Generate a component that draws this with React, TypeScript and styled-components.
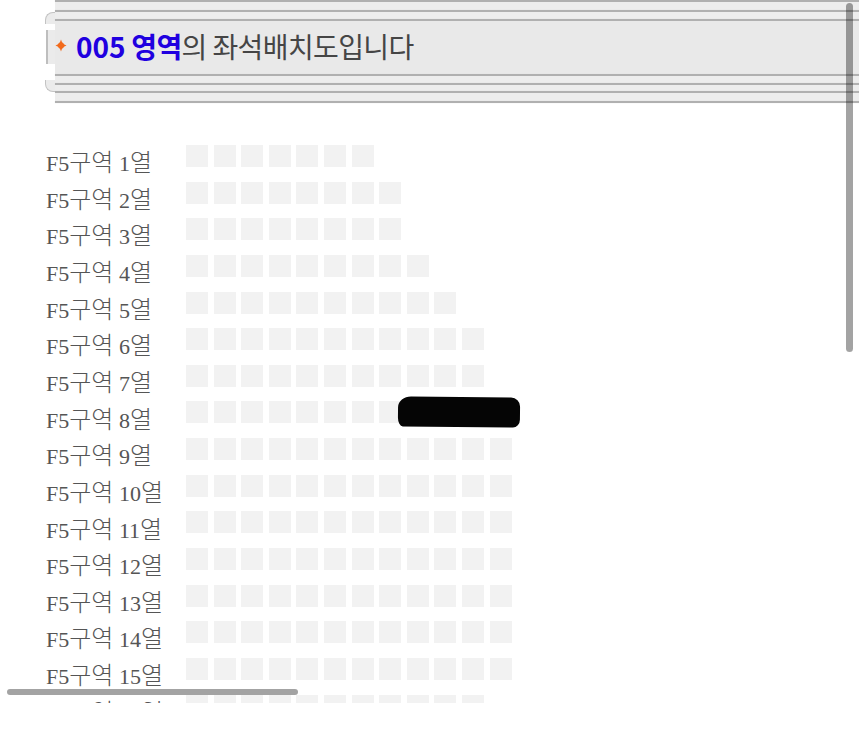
import React, { FC } from 'react'
import styled, { createGlobalStyle } from 'styled-components'

const SECTION = 'F5'
const ROW_COUNTS = [7, 8, 8, 9, 10, 11, 11, 12, 12, 12, 12, 12, 12, 12, 12, 11]
const REDACTED_ROW = 8

const GlobalStyle = createGlobalStyle`
  html, body {
    margin: 0;
    padding: 0;
    background: #fff;
    overflow: hidden;
  }
`

const Diamond: FC = () => (
  <svg width="12" height="13" viewBox="0 0 12 13">
    <path d="M6 0.5 C6.7 3.6 8.3 5.4 11.5 6.5 C8.3 7.6 6.7 9.4 6 12.5 C5.3 9.4 3.7 7.6 0.5 6.5 C3.7 5.4 5.3 3.6 6 0.5 Z" fill="#f26a1b" />
    <circle cx="6" cy="6.5" r="3" fill="#f26a1b" />
  </svg>
)

const SeatRow: FC<{ index: number; count: number }> = ({ index, count }) => (
  <Row>
    <Label>
      {SECTION}
      <Ko>구역</Ko> {index}
      <Ko>열</Ko>
    </Label>
    <Seats>
      {Array.from({ length: count }).map((_, i) => (
        <Seat key={i} />
      ))}
    </Seats>
    {index === REDACTED_ROW && <Redaction />}
  </Row>
)

export default function App() {
  return (
    <Page>
      <GlobalStyle />
      <Header>
        <LeftCap>
          <CapCorner />
          <CapGap h={6} />
          <CapSide />
          <CapGap h={16} />
          <CapCorner bottom />
        </LeftCap>
        <Bar>
          <Rule h={1.5} />
          <Band h={8} />
          <Rule />
          <Band h={7} />
          <Rule />
          <Panel>
            <Diamond />
            <Title>
              <Code>005</Code> <Area>영역</Area>의 좌석배치도입니다
            </Title>
          </Panel>
          <Rule />
          <Band h={7} />
          <Rule />
          <Band h={6} />
          <Rule />
          <Band h={8} />
          <Rule />
        </Bar>
      </Header>
      <SeatMap>
        {ROW_COUNTS.map((count, i) => (
          <SeatRow key={i} index={i + 1} count={count} />
        ))}
      </SeatMap>
      <VThumb />
      <HThumb />
    </Page>
  )
}

const Page = styled.div`
  position: relative;
  width: 859px;
  height: 750px;
  overflow: hidden;
  background: #fff;
`

const Header = styled.div`
  display: flex;
  padding-left: 45px;
  height: 102.5px;
`

const LeftCap = styled.div`
  width: 10px;
  flex: none;
  display: flex;
  flex-direction: column;
  padding-top: 12px;
`

const CapCorner = styled.div<{ bottom?: boolean }>`
  height: 12px;
  box-sizing: border-box;
  background: #ebebeb;
  border-left: 1.5px solid #c3c3c3;
  ${({ bottom }) =>
    bottom
      ? 'border-bottom: 1.5px solid #c3c3c3; border-bottom-left-radius: 8px;'
      : 'border-top: 1.5px solid #c3c3c3; border-top-left-radius: 8px;'}
`

const CapGap = styled.div<{ h: number }>`
  height: ${({ h }) => h}px;
`

const CapSide = styled.div`
  height: 34px;
  box-sizing: border-box;
  margin-left: 1px;
  background: #ebebeb;
  border-left: 2px solid #bebebe;
`

const Bar = styled.div`
  flex: 1;
  display: flex;
  flex-direction: column;
`

const Rule = styled.div<{ h?: number }>`
  height: ${({ h = 2 }) => h}px;
  background: #b0b0b0;
  box-shadow: 0 0 1px #cfcfcf;
`

const Band = styled.div<{ h: number }>`
  height: ${({ h }) => h}px;
  background: #ededed;
`

const Panel = styled.div`
  height: 53px;
  background: #e9e9e9;
  display: flex;
  align-items: center;
  gap: 9px;
  padding-bottom: 3px;
  box-sizing: border-box;
`

const Title = styled.div`
  font-family: 'Noto Sans CJK KR', 'Noto Sans', sans-serif;
  font-size: 28px;
  line-height: 28px;
  font-weight: 400;
  letter-spacing: -0.6px;
  color: #454545;
  white-space: nowrap;
`

const Code = styled.span`
  font-weight: 700;
  letter-spacing: 0;
  color: #2000e0;
`

const Area = styled.span`
  font-weight: 700;
  color: #2000e0;
`

const SeatMap = styled.div`
  height: 600.5px;
  overflow: hidden;
  box-sizing: border-box;
  padding: 35.1px 0 0 46px;
`

const Row = styled.div`
  position: relative;
  display: flex;
  height: 36.65px;
`

const Label = styled.div`
  width: 140px;
  flex: none;
  padding-top: 12.5px;
  font-family: 'Liberation Serif', 'Noto Sans CJK KR', serif;
  font-size: 22px;
  line-height: 22px;
  color: #555;
  white-space: nowrap;
`

const Ko = styled.span`
  font-family: 'Noto Sans CJK KR', sans-serif;
  font-size: 24px;
  font-weight: 300;
  line-height: 22px;
`

const Seats = styled.div`
  display: flex;
  align-items: flex-start;
  gap: 5.6px;
  padding-top: 7.4px;
`

const Seat = styled.div`
  width: 22px;
  height: 22px;
  background: #f2f2f2;
`

const Redaction = styled.div`
  position: absolute;
  left: 352px;
  top: 3px;
  width: 122px;
  height: 30px;
  background: #050505;
  border-radius: 13px 9px 7px 5px / 11px 9px 8px 9px;
  transform: rotate(0.6deg);
`

const VThumb = styled.div`
  position: absolute;
  left: 846px;
  top: 3px;
  width: 7px;
  height: 349px;
  border-radius: 4px;
  background: rgba(0, 0, 0, 0.36);
`

const HThumb = styled.div`
  position: absolute;
  left: 7px;
  top: 689px;
  width: 291px;
  height: 6px;
  border-radius: 3px;
  background: rgba(0, 0, 0, 0.36);
`
